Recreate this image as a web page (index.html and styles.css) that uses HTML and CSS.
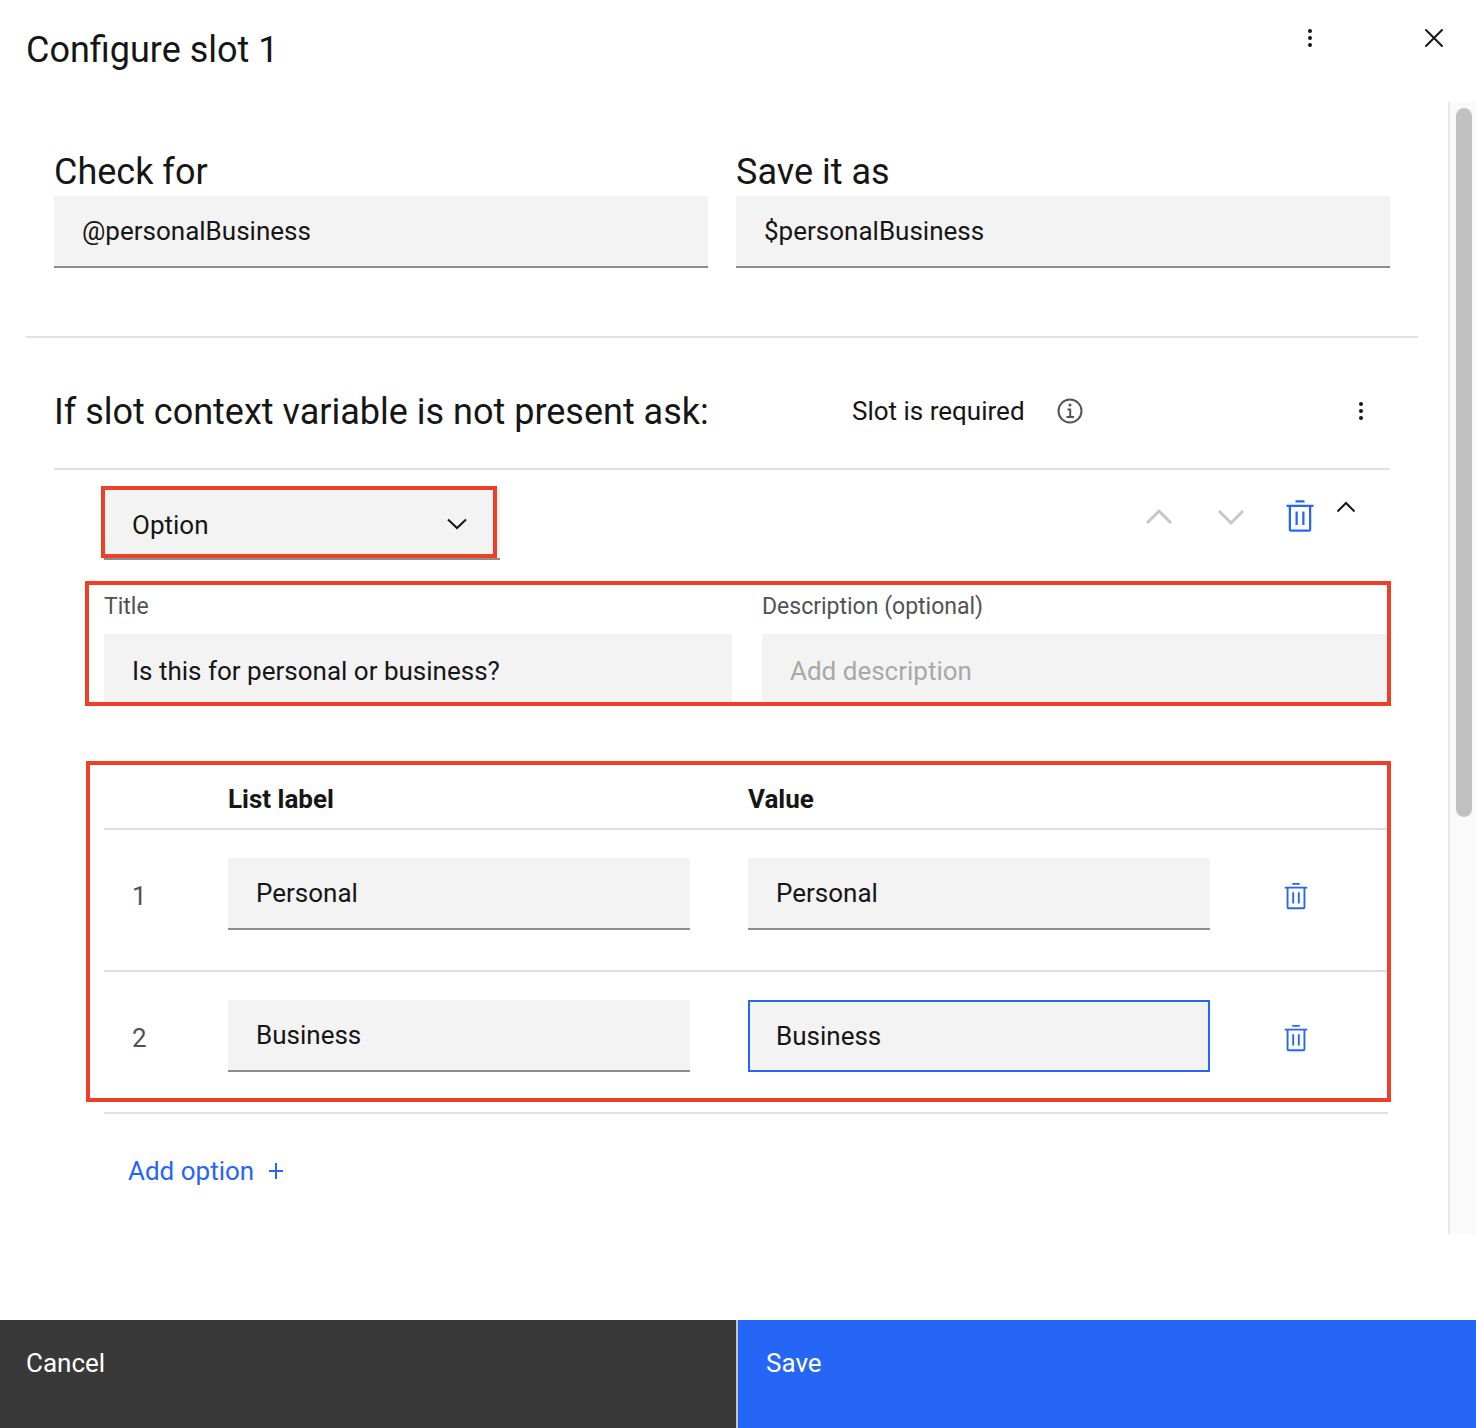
FILE: index.html
```html
<!DOCTYPE html>
<html lang="en">
<head>
<meta charset="utf-8">
<meta name="viewport" content="width=device-width, initial-scale=1">
<title>Configure slot 1</title>
<link rel="stylesheet" href="styles.css">
</head>
<body>
<svg class="sprite" aria-hidden="true">
  <symbol id="trash" viewBox="0 0 32 32"><path d="M12 12h2v12h-2zM18 12h2v12h-2zM4 6v2h2v20a2 2 0 0 0 2 2h16a2 2 0 0 0 2-2V8h2V6zm4 22V8h16v20zM12 2h8v2h-8z"/></symbol>
  <symbol id="kebab" viewBox="0 0 32 32"><circle cx="16" cy="9" r="2"/><circle cx="16" cy="16" r="2"/><circle cx="16" cy="23" r="2"/></symbol>
</svg>
<div class="dialog">
  <header class="dialog-header">
    <h1 class="heading">Configure slot 1</h1>
    <div class="header-actions">
      <button class="icon-button" type="button" aria-label="Slot options"><svg class="icon" width="32" height="32"><use href="#kebab"/></svg></button>
      <button class="icon-button" type="button" aria-label="Close"><svg class="icon" width="32" height="32" viewBox="0 0 32 32"><path class="line" stroke-linecap="round" d="M8 8l16 16M24 8l-16 16"/></svg></button>
    </div>
  </header>

  <div class="dialog-body">
    <main class="content">
      <section class="binding">
        <div class="field">
          <label class="heading" for="check-for">Check for</label>
          <input class="input" id="check-for" type="text" value="@personalBusiness">
        </div>
        <div class="field">
          <label class="heading" for="save-as">Save it as</label>
          <input class="input" id="save-as" type="text" value="$personalBusiness">
        </div>
      </section>

      <section class="prompt">
        <div class="prompt-header">
          <h2 class="heading">If slot context variable is not present ask:</h2>
          <div class="prompt-status">
            <span>Slot is required</span>
            <svg class="info" width="26" height="26" viewBox="0 0 26 26" aria-hidden="true"><circle class="info-line" cx="13" cy="13" r="11.5"/><path class="info-line" d="M10.5 11.5H13.2V18.9M9.5 18.9H17"/><circle cx="13" cy="7" r="1.5"/></svg>
            <button class="icon-button prompt-menu" type="button" aria-label="Prompt options"><svg class="icon" width="32" height="32"><use href="#kebab"/></svg></button>
          </div>
        </div>

        <div class="response">
          <div class="response-bar">
            <div class="type-select highlight">
              <select class="input" aria-label="Response type"><option>Option</option></select>
              <svg class="select-caret" width="20" height="12" viewBox="0 0 20 12" aria-hidden="true"><path class="line" d="M1 1.5l9 8.5 9-8.5"/></svg>
            </div>
            <div class="response-actions">
              <button class="icon-button" type="button" aria-label="Move up" disabled><svg class="muted" width="36" height="36" viewBox="0 0 36 36"><path class="line thick" d="M6 25l12-12 12 12"/></svg></button>
              <button class="icon-button" type="button" aria-label="Move down" disabled><svg class="muted" width="36" height="36" viewBox="0 0 36 36"><path class="line thick" d="M6 13l12 12 12-12"/></svg></button>
              <button class="icon-button remove" type="button" aria-label="Delete response"><svg class="icon accent" width="36" height="36"><use href="#trash"/></svg></button>
              <button class="icon-button collapse" type="button" aria-label="Collapse"><svg class="icon" width="24" height="24" viewBox="0 0 24 24"><path class="line" d="M3.5 13.500L12 5l8.500 8.500"/></svg></button>
            </div>
          </div>

          <div class="prompt-fields highlight">
            <div class="field">
              <label class="label" for="title">Title</label>
              <input class="input" id="title" type="text" value="Is this for personal or business?">
            </div>
            <div class="field">
              <label class="label" for="description">Description (optional)</label>
              <input class="input" id="description" type="text" placeholder="Add description">
            </div>
          </div>

          <div class="options highlight">
            <table class="options-table">
              <colgroup><col class="col-index"><col><col><col class="col-delete"></colgroup>
              <thead>
                <tr><td></td><th id="col-label" scope="col">List label</th><th id="col-value" scope="col">Value</th><td></td></tr>
              </thead>
              <tbody>
                <tr>
                  <td class="index">1</td>
                  <td><input class="input" type="text" aria-labelledby="col-label" value="Personal"></td>
                  <td><input class="input" type="text" aria-labelledby="col-value" value="Personal"></td>
                  <td class="delete"><button class="icon-button" type="button" aria-label="Delete option 1"><svg class="icon accent" width="30" height="30"><use href="#trash"/></svg></button></td>
                </tr>
                <tr>
                  <td class="index">2</td>
                  <td><input class="input" type="text" aria-labelledby="col-label" value="Business"></td>
                  <td><input class="input active" type="text" aria-labelledby="col-value" value="Business"></td>
                  <td class="delete"><button class="icon-button" type="button" aria-label="Delete option 2"><svg class="icon accent" width="30" height="30"><use href="#trash"/></svg></button></td>
                </tr>
              </tbody>
            </table>
          </div>

          <button class="add-option" type="button">Add option
            <svg class="accent" width="16" height="16" viewBox="0 0 16 16" aria-hidden="true"><path class="line" d="M8 0v16M1 8h14"/></svg>
          </button>
        </div>
      </section>
    </main>
    <div class="scroll-track" aria-hidden="true"><div class="scroll-thumb"></div></div>
  </div>

  <footer class="dialog-footer">
    <button class="action cancel" type="button">Cancel</button>
    <button class="action save" type="button">Save</button>
  </footer>
</div>
</body>
</html>
```
FILE: styles.css
```css
:root {
  --ink: #161616;
  --ink-soft: #525252;
  --field: #f3f3f3;
  --rule: #e0e0e0;
  --rule-strong: #8d8d8d;
  --blue: #2666f6;
  --red: #ee4027;
}

* { box-sizing: border-box; }

body {
  margin: 0;
  background: #fff;
  color: var(--ink);
  font: 400 26px/32px Roboto, "Liberation Sans", sans-serif;
}

.sprite { position: absolute; width: 0; height: 0; }

svg { display: block; fill: currentColor; }
.line { fill: none; stroke: currentColor; stroke-width: 2; }
.thick { stroke-width: 3; }
.accent { color: var(--blue); }
.muted { color: #c6c6c6; }

button, input, select { font: inherit; color: inherit; }

.icon-button {
  display: block;
  padding: 0;
  border: 0;
  background: none;
}

.heading {
  margin: 0;
  font-size: 36px;
  font-weight: 400;
  line-height: 48px;
}

.label {
  margin-bottom: 10px;
  color: var(--ink-soft);
  font-size: 23px;
  line-height: 34px;
}

.field { display: flex; flex-direction: column; }

.input {
  display: block;
  width: 100%;
  height: 72px;
  padding: 0 28px;
  border: 0;
  border-bottom: 2px solid var(--rule-strong);
  border-radius: 0;
  outline: 0;
  background: var(--field);
  appearance: none;
}
.input::placeholder { color: #a8a8a8; opacity: 1; }
.input.active { padding: 0 26px; border: 2px solid var(--blue); }
.highlight > .input,
.highlight > .field > .input { padding-top: 4px; }

/* Red callout frame round the parts being explained */
.highlight { position: relative; }
.highlight::after {
  content: "";
  position: absolute;
  border: 4px solid var(--red);
  pointer-events: none;
}

.dialog {
  display: flex;
  flex-direction: column;
  min-height: 100vh;
}

.dialog-header {
  display: flex;
  justify-content: space-between;
  align-items: flex-start;
  min-height: 102px;
  padding: 22px 26px 0;
}
.dialog-header .heading { padding-top: 4px; }
.header-actions { display: flex; gap: 92px; }

.dialog-body {
  display: flex;
  flex: 1;
  margin-bottom: 86px;
}

.content { flex: 1; min-width: 0; padding: 0 30px 0 26px; }

.scroll-track {
  width: 28px;
  padding: 6px 4px 0 6px;
  border-left: 2px solid #e8e8e8;
  background: #fafafa;
}
.scroll-thumb {
  width: 16px;
  height: 63%;
  border-radius: 8px;
  background: #c1c1c1;
}

.binding {
  display: grid;
  grid-template-columns: 1fr 1fr;
  gap: 28px;
  padding: 46px 28px 68px;
  border-bottom: 2px solid var(--rule);
}

.prompt { padding: 0 28px; }
.prompt-header {
  display: grid;
  grid-template-columns: 798fr 538fr;
  align-items: center;
  padding: 50px 0 32px;
  border-bottom: 2px solid var(--rule);
}
.prompt-status {
  display: flex;
  align-items: center;
  gap: 32px;
  padding-bottom: 3px;
}
.prompt-menu { margin: 0 13px 0 auto; }
.info { color: var(--ink-soft); }
.info-line { fill: none; stroke: currentColor; stroke-width: 2; }

.response { padding: 18px 0 0 50px; }

.response-bar {
  display: flex;
  justify-content: space-between;
  align-items: flex-start;
}
.type-select { width: 396px; }
.type-select::after { inset: -2px 3px 2px -3px; }
.select-caret { position: absolute; top: 30px; right: 33px; }
.response-actions {
  display: flex;
  gap: 36px;
  padding: 10px 32px 0 0;
}
.remove { margin-left: -3px; }
.collapse { margin-left: -20px; align-self: flex-start; }

.prompt-fields {
  display: grid;
  grid-template-columns: 1fr 1fr;
  gap: 30px;
  margin-top: 30px;
}
.prompt-fields::after { inset: -9px -1px 0 -19px; }

.options { margin-top: 64px; padding-right: 2px; }
.options::after { inset: -9px -1px 12px -18px; }

.options-table {
  width: 100%;
  border-collapse: separate;
  border-spacing: 0;
  table-layout: fixed;
}
.col-index { width: 124px; }
.col-delete { width: 120px; }
.options-table th,
.options-table td {
  padding: 0 58px 0 0;
  border-bottom: 2px solid var(--rule);
  text-align: left;
  vertical-align: top;
}
.options-table thead th,
.options-table thead td {
  height: 60px;
  padding-top: 13px;
  font-weight: 700;
}
.options-table tbody td { height: 142px; padding-top: 28px; }
.options-table tbody .index { padding: 50px 0 0 28px; color: var(--ink-soft); }
.options-table tbody .delete { padding: 51px 0 0 13px; }

.add-option {
  display: flex;
  align-items: center;
  gap: 14px;
  margin: 33px 0 39px 24px;
  padding: 0;
  height: 48px;
  border: 0;
  background: none;
  color: var(--blue);
}

.dialog-footer {
  display: grid;
  grid-template-columns: 1fr 1fr;
}
.action {
  height: 108px;
  padding: 27px 26px 49px;
  border: 0;
  color: #fff;
  line-height: 32px;
  text-align: left;
}
.cancel { border-right: 2px solid #c6c6c6; background: #393939; }
.save { padding-left: 28px; background: var(--blue); }
```
